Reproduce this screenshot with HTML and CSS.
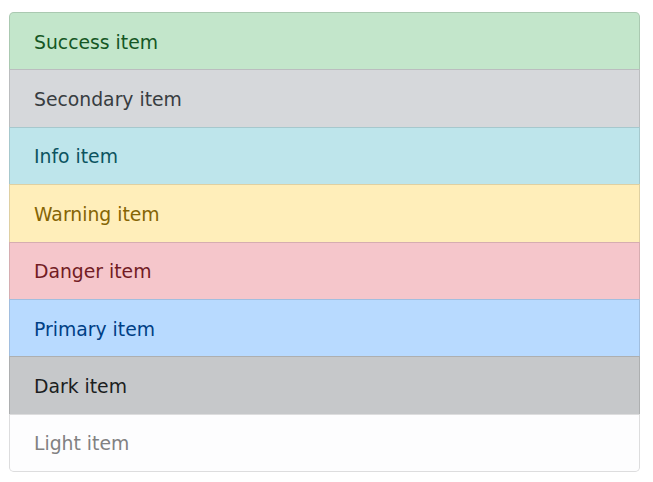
FILE: index.html
```html
<!DOCTYPE html>
<html>
<head>
<meta charset="utf-8">
<link rel="stylesheet" href="styles.css">
</head>
<body>
<ul class="list-group">
  <li class="item success">Success item</li>
  <li class="item secondary">Secondary item</li>
  <li class="item info">Info item</li>
  <li class="item warning">Warning item</li>
  <li class="item danger">Danger item</li>
  <li class="item primary">Primary item</li>
  <li class="item dark">Dark item</li>
  <li class="item light">Light item</li>
</ul>
</body>
</html>
```
FILE: styles.css
```css
html, body {
  margin: 0;
  padding: 0;
  background: #fff;
}
body {
  padding: 12px 13px 0 9px;
  font-family: "DejaVu Sans", Verdana, sans-serif;
  font-size: 18.8px;
  line-height: 28px;
}
.list-group {
  list-style: none;
  margin: 0;
  padding: 0;
  width: 631px;
  display: flex;
  flex-direction: column;
}
.item {
  padding: 15.6px 24px 12.8px;
  border: 1px solid rgba(0,0,0,.125);
  margin-bottom: -1px;
}
.item:first-child {
  border-top-left-radius: 4.8px;
  border-top-right-radius: 4.8px;
}
.item:last-child {
  margin-bottom: 0;
  border-bottom-left-radius: 4.8px;
  border-bottom-right-radius: 4.8px;
}
.success { background: #c3e6cb; color: #155724; }
.secondary { background: #d6d8db; color: #383d41; }
.info { background: #bee5eb; color: #0c5460; }
.warning { background: #ffeeba; color: #856404; }
.danger { background: #f5c6cb; color: #721c24; }
.primary { background: #b8daff; color: #004085; }
.dark { background: #c6c8ca; color: #1b1e21; }
.light { background: #fdfdfe; color: #818182; }
```
